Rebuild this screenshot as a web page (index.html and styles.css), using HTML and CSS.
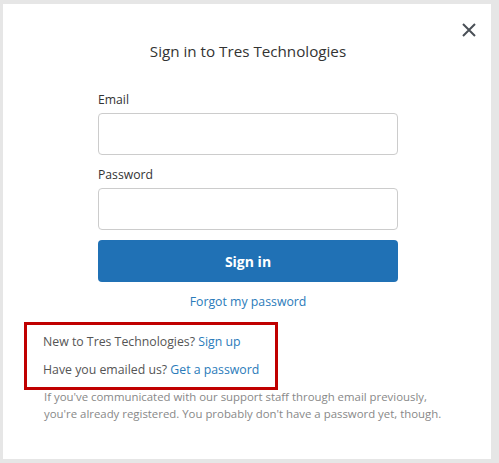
FILE: index.html
```html
<!DOCTYPE html>
<html lang="en">
<head>
    <meta charset="UTF-8">
    <meta name="viewport" content="width=device-width, initial-scale=1.0">
    <title>Sign in to Tres Technologies</title>
    <link rel="stylesheet" href="styles.css">
</head>
<body>
    <div class="modal">
        <button class="close-btn" aria-label="Close">
            <svg width="14" height="14" viewBox="0 0 14 14">
                <path d="M1 1 L13 13 M13 1 L1 13" stroke="#4a5057" stroke-width="2" fill="none"/>
            </svg>
        </button>

        <h2 class="modal-title">Sign in to Tres Technologies</h2>

        <form class="signin-form" onsubmit="return false">
            <label for="email">Email</label>
            <input type="email" id="email">

            <label for="password">Password</label>
            <input type="password" id="password">

            <button type="submit" class="signin-btn">Sign in</button>
            <a href="#" class="forgot-link">Forgot my password</a>
        </form>

        <div class="highlight-box">
            <p>New to Tres Technologies? <a href="#">Sign up</a></p>
            <p>Have you emailed us? <a href="#">Get a password</a></p>
        </div>

        <p class="help-note">If you've communicated with our support staff through email previously, you're already registered. You probably don't have a password yet, though.</p>
    </div>
</body>
</html>
```

FILE: styles.css
```css
body {
    margin: 0;
    padding: 0;
    background-color: #e6e6e6;
    font-family: 'Open Sans', 'Noto Sans', sans-serif;
    color: #333;
    height: 463px;
    overflow: hidden;
}
.modal {
    position: relative;
    background-color: white;
    margin: 4px 8px 0 3px;
    height: 455px;
    box-sizing: border-box;
    padding: 36px 39px 0 41px;
}
.close-btn {
    position: absolute;
    top: 19px;
    right: 15px;
    background: none;
    border: none;
    padding: 0;
    cursor: pointer;
}
.close-btn svg {
    display: block;
}
.modal-title {
    margin: 0;
    font-size: 15.2px;
    font-weight: normal;
    line-height: 22px;
    text-align: center;
    color: #333;
}
.signin-form {
    width: 300px;
    margin: 29px auto 0 auto;
    display: flex;
    flex-direction: column;
}
.signin-form label {
    font-size: 12.2px;
    line-height: 18px;
    color: #333;
    margin-bottom: 4px;
}
.signin-form input {
    height: 42px;
    box-sizing: border-box;
    border: 1px solid #ccc;
    border-radius: 4px;
    margin-bottom: 11px;
    font-size: 14px;
    padding: 0 10px;
}
.signin-form input#password {
    margin-bottom: 10px;
}
.signin-btn {
    height: 42px;
    background-color: #2071b5;
    color: white;
    border: none;
    border-radius: 4px;
    font-family: inherit;
    font-size: 14px;
    font-weight: bold;
    cursor: pointer;
}
.forgot-link {
    margin-top: 11px;
    align-self: center;
    font-size: 12.3px;
    line-height: 18px;
    color: #2b7bba;
    text-decoration: none;
}
.highlight-box {
    width: fit-content;
    margin: 11px 0 0 -20px;
    padding: 3px 16px 3px 16px;
    border: 3px solid #c00000;
}
.highlight-box p {
    margin: 0;
    font-size: 12.3px;
    line-height: 28px;
    color: #555;
}
.highlight-box a {
    color: #2b7bba;
    text-decoration: none;
}
.help-note {
    margin: -2px 0 0 0;
    font-size: 11.4px;
    line-height: 17px;
    color: #888;
    width: 405px;
}
```
